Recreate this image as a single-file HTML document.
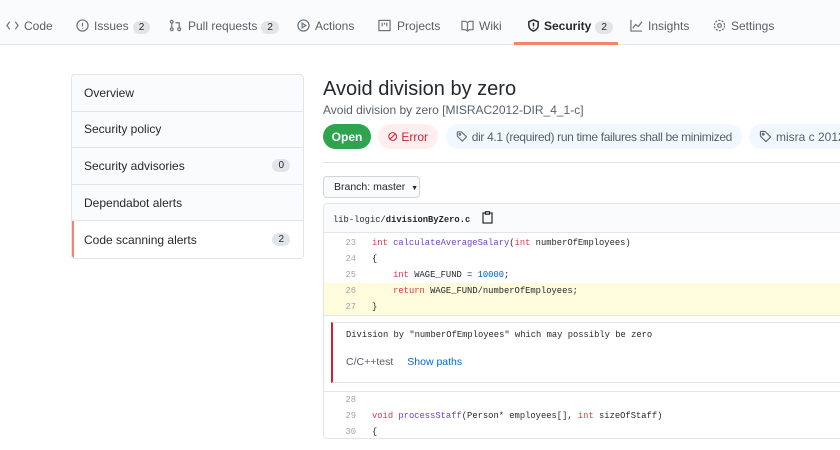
<!DOCTYPE html>
<html><head><meta charset="utf-8"><style>
*{box-sizing:border-box;margin:0;padding:0}
body{width:840px;height:450px;overflow:hidden;background:#fff;font-family:"Liberation Sans",sans-serif;color:#24292e;position:relative}
.nav{position:absolute;left:0;top:0;width:840px;height:45px;background:#fafbfc;border-bottom:1px solid #e1e4e8}
.tab{position:absolute;top:19px;font-size:12px;color:#586069;white-space:nowrap}
.ic{position:absolute;top:19px;width:13px;height:13px;fill:none;stroke:#6a737d;stroke-width:1.3}
.cnt{display:inline-block;background:#e1e4e8;border-radius:10px;font-size:10px;padding:1px 6px;color:#24292e;margin-left:4px}
.sel{color:#24292e;font-weight:bold}
.uline{position:absolute;left:514px;top:42px;width:104px;height:3px;background:#f9826c}
.side{position:absolute;left:71px;top:74px;width:233px;height:185px;border:1px solid #e1e4e8;border-radius:4px;overflow:hidden}
.si{height:36.6px;border-bottom:1px solid #e1e4e8;background:#fafbfc;font-size:12px;padding-left:12px;display:flex;align-items:center;justify-content:space-between;padding-right:13px}
.si:last-child{border-bottom:0;background:#fff;border-left:2px solid #f9826c;padding-left:10px}
.si .cnt{font-size:10px;padding:1px 6px}
h1{position:absolute;left:323px;top:78px;font-size:20px;font-weight:normal}
.sub{position:absolute;left:323px;top:103px;font-size:12px;color:#586069}
.pill{position:absolute;top:124px;height:25px;border-radius:13px;font-size:12px;display:flex;align-items:center;padding:0 10px;white-space:nowrap;overflow:hidden}
.hr{position:absolute;left:323px;top:162px;width:517px;height:1px;background:#e1e4e8}
.br{position:absolute;left:323px;top:176px;width:97px;height:22px;border:1px solid #d1d5da;border-radius:4px;background:#fafbfc;font-size:10.5px;padding:4px 0 0 10px;white-space:nowrap}
.box{position:absolute;left:323px;top:203px;width:530px;height:236px;border:1px solid #e1e4e8;border-radius:4px;overflow:hidden}
.fh{height:29px;background:#fafbfc;border-bottom:1px solid #e1e4e8;font-family:"Liberation Mono",monospace;font-size:8.8px;padding:7px 0 0 9px}
.ln{height:16px;font-family:"Liberation Mono",monospace;font-size:8.8px;line-height:16px;white-space:pre;position:relative}
.ln .n{position:absolute;left:0;width:32px;text-align:right;color:#a0a6ad}
.ln .c{position:absolute;left:48px}
.k{color:#d73a49}.f{color:#6f42c1}.b{color:#005cc5}
.hl{background:#fffbdd}
.al{margin:6px 0 8px 7px;height:61px;border-left:2px solid #cb2431;border-top:1px solid #e1e4e8;border-bottom:1px solid #e1e4e8;position:relative}
</style></head><body>
<div class="nav"></div>
<svg class="ic" style="left:6px" viewBox="0 0 14 14"><path d="M4 3L1 7l3 4M10 3l3 4-3 4"/></svg><div class="tab" style="left:24px">Code</div>
<svg class="ic" style="left:76px" viewBox="0 0 14 14"><circle cx="7" cy="7" r="6"/><path d="M7 4v4M7 9.5v1"/></svg><div class="tab" style="left:94px">Issues<span class="cnt">2</span></div>
<svg class="ic" style="left:169px" viewBox="0 0 14 14"><circle cx="3" cy="3" r="1.5"/><circle cx="3" cy="11" r="1.5"/><circle cx="11" cy="11" r="1.5"/><path d="M3 4.5v5M11 9.5V4H7"/></svg><div class="tab" style="left:188px">Pull requests<span class="cnt">2</span></div>
<svg class="ic" style="left:297px" viewBox="0 0 14 14"><circle cx="7" cy="7" r="6"/><path d="M5.5 4.5l4 2.5-4 2.5z"/></svg><div class="tab" style="left:315px">Actions</div>
<svg class="ic" style="left:378px" viewBox="0 0 14 14"><rect x="1" y="1.5" width="12" height="11"/><path d="M4.5 4v4M7 4v2M9.5 4v4"/></svg><div class="tab" style="left:397px">Projects</div>
<svg class="ic" style="left:461px" viewBox="0 0 14 14"><path d="M1 2.5h4l2 1.5 2-1.5h4v9H9L7 13l-2-1.5H1zM7 4v9"/></svg><div class="tab" style="left:479px">Wiki</div>
<svg class="ic" style="left:527px;stroke:#24292e;stroke-width:1.6" viewBox="0 0 14 14"><path d="M7 1l5 2v4c0 3-2.5 5-5 6-2.5-1-5-3-5-6V3z"/><path d="M7 4v4M7 9.5v1"/></svg><div class="tab sel" style="left:544px">Security<span class="cnt" style="font-weight:normal">2</span></div>
<svg class="ic" style="left:630px" viewBox="0 0 14 14"><path d="M1 1v12h12M3 10l3-4 3 2 4-5"/></svg><div class="tab" style="left:648px">Insights</div>
<svg class="ic" style="left:713px" viewBox="0 0 14 14"><circle cx="7" cy="7" r="2"/><circle cx="7" cy="7" r="5.5" stroke-dasharray="2.2 1.3"/></svg><div class="tab" style="left:731px">Settings</div>
<div class="uline"></div>

<div class="side">
<div class="si">Overview</div>
<div class="si">Security policy</div>
<div class="si">Security advisories<span class="cnt">0</span></div>
<div class="si">Dependabot alerts</div>
<div class="si">Code scanning alerts<span class="cnt">2</span></div>
</div>

<h1>Avoid division by zero</h1>
<div class="sub">Avoid division by zero [MISRAC2012-DIR_4_1-c]</div>
<div class="pill" style="left:323px;width:48px;background:#2ea44f;color:#fff;font-weight:bold;justify-content:center;padding:0">Open</div>
<div class="pill" style="left:378px;width:60px;background:#ffeef0;color:#cb2431;gap:4px">
<svg width="13" height="13" viewBox="0 0 14 14" fill="none" stroke="#cb2431" stroke-width="1.6"><circle cx="7" cy="7" r="5.8"/><path d="M3 11L11 3"/></svg>Error</div>
<div class="pill" style="left:446px;width:296px;background:#f1f8ff;color:#586069;gap:4px;letter-spacing:-0.35px"><svg width="13" height="13" viewBox="0 0 14 14" fill="none" stroke="#586069" stroke-width="1.2"><path d="M1.5 2v4.5l6 6 5-5-6-6H2z"/><circle cx="4.5" cy="4.5" r="1"/></svg>dir 4.1 (required) run time failures shall be minimized</div>
<div class="pill" style="left:749px;width:110px;background:#f1f8ff;color:#586069;gap:4px"><svg width="13" height="13" viewBox="0 0 14 14" fill="none" stroke="#586069" stroke-width="1.2"><path d="M1.5 2v4.5l6 6 5-5-6-6H2z"/><circle cx="4.5" cy="4.5" r="1"/></svg>misra c 2012</div>
<div class="hr"></div>
<div class="br">Branch: master <span style="font-size:7px;margin-left:3px">▼</span></div>

<div class="box">
<div class="fh">lib-logic/<b>divisionByZero.c</b> <svg style="vertical-align:-2px;margin-left:6px" width="11" height="13" viewBox="0 0 11 13" fill="none" stroke="#24292e" stroke-width="1.2"><rect x="1" y="2" width="9" height="10"/><rect x="3.5" y="0.8" width="4" height="2.4" fill="#fff"/></svg></div>
<div style="height:2px"></div>
<div class="ln"><span class="n">23</span><span class="c"><span class="k">int</span> <span class="f">calculateAverageSalary</span>(<span class="k">int</span> numberOfEmployees)</span></div>
<div class="ln"><span class="n">24</span><span class="c">{</span></div>
<div class="ln"><span class="n">25</span><span class="c">    <span class="k">int</span> WAGE_FUND = <span class="b">10000</span>;</span></div>
<div class="ln hl"><span class="n">26</span><span class="c">    <span class="k">return</span> WAGE_FUND/numberOfEmployees;</span></div>
<div class="ln hl"><span class="n">27</span><span class="c">}</span></div>
<div style="border-top:1px solid #e1e4e8;height:1px"></div>
<div class="al">
<div style="position:absolute;left:13px;top:7px;font-family:'Liberation Mono',monospace;font-size:8.8px">Division by "numberOfEmployees" which may possibly be zero</div>
<div style="position:absolute;left:13px;top:33px;font-size:10.5px;color:#586069">C/C++test<span style="color:#0366d6;margin-left:14px">Show paths</span></div>
</div>
<div style="border-top:1px solid #e1e4e8;height:1px"></div>
<div class="ln"><span class="n">28</span><span class="c"></span></div>
<div class="ln"><span class="n">29</span><span class="c"><span class="k">void</span> <span class="f">processStaff</span>(Person* employees[], <span class="k">int</span> sizeOfStaff)</span></div>
<div class="ln"><span class="n">30</span><span class="c">{</span></div>
</div>
</body></html>
